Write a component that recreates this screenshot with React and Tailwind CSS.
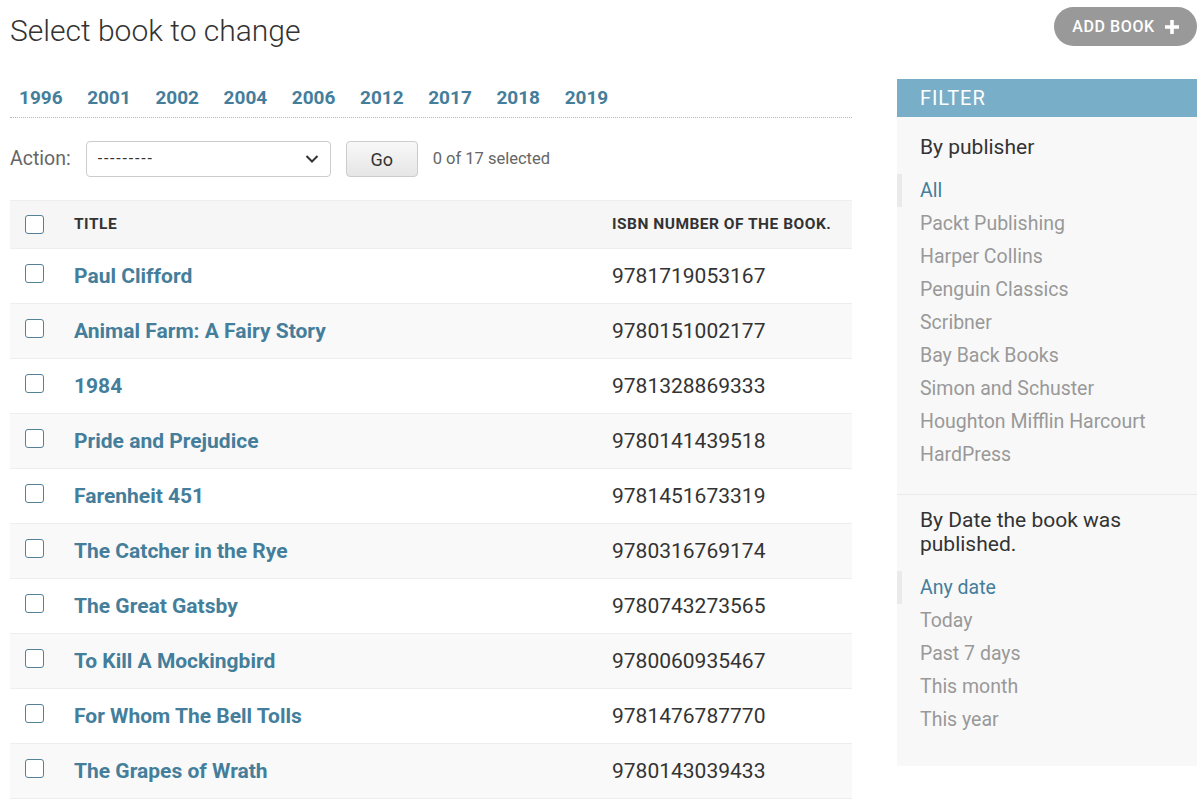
const years = ["1996", "2001", "2002", "2004", "2006", "2012", "2017", "2018", "2019"];

const books = [
  ["Paul Clifford", "9781719053167"],
  ["Animal Farm: A Fairy Story", "9780151002177"],
  ["1984", "9781328869333"],
  ["Pride and Prejudice", "9780141439518"],
  ["Farenheit 451", "9781451673319"],
  ["The Catcher in the Rye", "9780316769174"],
  ["The Great Gatsby", "9780743273565"],
  ["To Kill A Mockingbird", "9780060935467"],
  ["For Whom The Bell Tolls", "9781476787770"],
  ["The Grapes of Wrath", "9780143039433"],
];

const publishers = [
  "All",
  "Packt Publishing",
  "Harper Collins",
  "Penguin Classics",
  "Scribner",
  "Bay Back Books",
  "Simon and Schuster",
  "Houghton Mifflin Harcourt",
  "HardPress",
];

const dates = ["Any date", "Today", "Past 7 days", "This month", "This year"];

function Checkbox() {
  return (
    <span className="block w-[19px] h-[19px] rounded-[3px] border border-[#55809a] bg-white" />
  );
}

function FilterList({ items }) {
  return (
    <ul className="text-[19.5px]">
      {items.map((item, i) => (
        <li
          key={item}
          className={
            "h-[33px] flex items-center pl-[18px] border-l-[5px] " +
            (i === 0 ? "border-[#eaeaea] text-[#447e9b]" : "border-transparent text-[#999]")
          }
        >
          {item}
        </li>
      ))}
    </ul>
  );
}

export default function App() {
  return (
    <div
      className="w-[1203px] h-[806px] bg-white text-[#333] pl-[10px] pr-[6px] overflow-hidden"
      style={{ fontFamily: "Roboto, 'Liberation Sans', sans-serif" }}
    >
      <div className="flex items-start justify-between pt-[7px]">
        <h1 className="text-[30px] font-light leading-[34px] mt-[7px] text-[#333]">
          Select book to change
        </h1>
        <button className="h-[39px] w-[143px] rounded-full bg-[#999] text-white text-[16px] tracking-[0.6px] flex items-center justify-center gap-[10px] font-medium">
          ADD BOOK
          <svg width="14" height="14" viewBox="0 0 14 14">
            <path d="M5.2 0h3.6v5.2H14v3.6H8.8V14H5.2V8.8H0V5.2h5.2z" fill="white" />
          </svg>
        </button>
      </div>

      <div className="flex gap-[45px] mt-[31px]">
        <div className="w-[842px]">
          <div className="h-[39px] border-b border-dotted border-[#bbb] flex items-end pb-[9px] pl-[9px] gap-[24.6px] text-[19px] font-bold text-[#447e9b]">
            {years.map((y) => (
              <a key={y} href="#" className="leading-[20px]">
                {y}
              </a>
            ))}
          </div>

          <div className="flex items-center h-[36px] mt-[23px] text-[#666]">
            <span className="text-[19.5px]">Action:</span>
            <div className="ml-[15px] w-[245px] h-[36px] border border-[#ccc] rounded-[4px] flex items-center justify-between pl-[11px] pr-[11px] bg-white">
              <span className="text-[16px] text-[#333] tracking-[1.8px]">---------</span>
              <svg width="14" height="10" viewBox="0 0 14 10">
                <path d="M1.5 2l5.5 5.5L12.5 2" stroke="#333" strokeWidth="2" fill="none" />
              </svg>
            </div>
            <button className="ml-[15px] w-[72px] h-[36px] border border-[#ccc] rounded-[4px] bg-gradient-to-b from-[#f8f8f8] to-[#e6e6e6] text-[18px] text-[#333]">
              Go
            </button>
            <span className="ml-[15px] text-[16.5px] text-[#666]">0 of 17 selected</span>
          </div>

          <table className="w-full mt-[23px] border-collapse">
            <thead>
              <tr className="h-[48px] bg-[#f6f6f6] border-y border-[#eee]">
                <th className="w-[64px] pl-[15px] text-left align-middle">
                  <Checkbox />
                </th>
                <th className="text-left text-[15.5px] tracking-[0.5px] font-bold text-[#333] uppercase align-middle">
                  Title
                </th>
                <th className="w-[240px] text-left text-[15.5px] tracking-[0.5px] font-bold text-[#333] uppercase align-middle">
                  ISBN number of the book.
                </th>
              </tr>
            </thead>
            <tbody>
              {books.map(([title, isbn], i) => (
                <tr
                  key={isbn}
                  className={"h-[55px] border-b border-[#eee] " + (i % 2 ? "bg-[#f9f9f9]" : "bg-white")}
                >
                  <td className="pl-[15px] align-middle">
                    <div className="-mt-[5px]">
                      <Checkbox />
                    </div>
                  </td>
                  <td className="pt-[2px] text-[21px] font-bold text-[#447e9b] align-middle">{title}</td>
                  <td className="pt-[2px] text-[21px] text-[#333] align-middle">{isbn}</td>
                </tr>
              ))}
            </tbody>
          </table>
        </div>

        <aside className="w-[300px] bg-[#f8f8f8] h-[687px]">
          <h2 className="h-[38px] bg-[#79aec8] text-white flex items-center pl-[23px] text-[20px] font-normal tracking-[0.9px]">
            FILTER
          </h2>
          <h3 className="pl-[23px] pt-[18px] pb-[15px] text-[21px] text-[#333] leading-[24px]">By publisher</h3>
          <FilterList items={publishers} />
          <div className="border-t border-[#eaeaea] mt-[23px]" />
          <h3 className="pl-[23px] pt-[13px] pb-[15px] text-[21px] text-[#333] leading-[24px] pr-[40px]">
            By Date the book was published.
          </h3>
          <FilterList items={dates} />
        </aside>
      </div>
    </div>
  );
}
